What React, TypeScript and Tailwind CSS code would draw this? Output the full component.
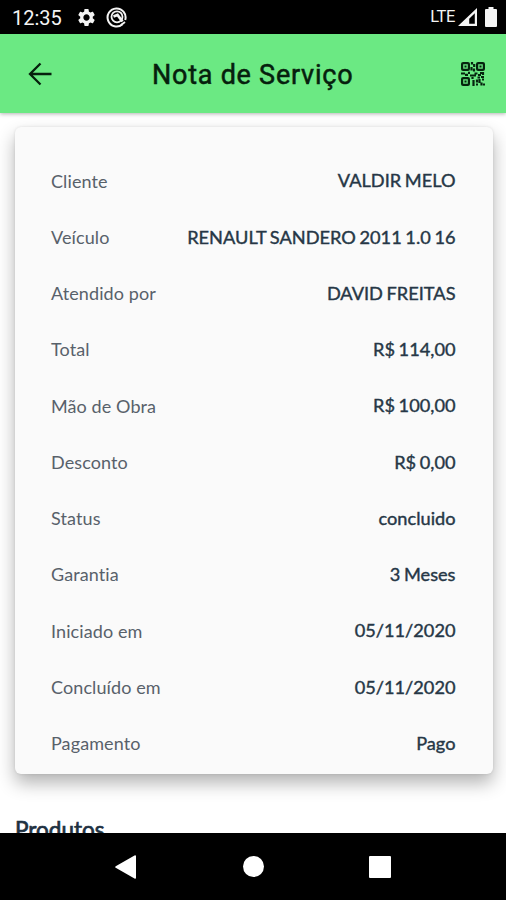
import { MdSettings } from "react-icons/md";

const rows = [
    { label: "Cliente", value: "VALDIR MELO" },
    { label: "Veículo", value: "RENAULT SANDERO 2011 1.0 16" },
    { label: "Atendido por", value: "DAVID FREITAS" },
    { label: "Total", value: "R$ 114,00" },
    { label: "Mão de Obra", value: "R$ 100,00" },
    { label: "Desconto", value: "R$ 0,00" },
    { label: "Status", value: "concluido" },
    { label: "Garantia", value: "3 Meses" },
    { label: "Iniciado em", value: "05/11/2020" },
    { label: "Concluído em", value: "05/11/2020" },
    { label: "Pagamento", value: "Pago" },
];

function BackIcon() {
    return (
        <svg width="24" height="24" viewBox="0 0 24 24" fill="none" stroke="#06200d" strokeWidth="2.3">
            <path d="M12.5 1.5L2 12l10.5 10.5M2.5 12H23.5" />
        </svg>
    );
}

function QrIcon() {
    return (
        <svg width="24" height="24" viewBox="0 0 24 24" fill="none" stroke="#06240e" strokeWidth="2.2">
            <rect x="1.1" y="1.1" width="6.8" height="6.8" rx="1" />
            <rect x="16.1" y="1.1" width="6.8" height="6.8" rx="1" />
            <rect x="1.1" y="16.1" width="6.8" height="6.8" rx="1" />
            <path strokeWidth="2" d="M3.5 4.5h2M18.5 4.5h2M3.5 19.5h2" />
            <path d="M11 0v2.5M13.2 2v3M10.5 5v3.5M13 6.5v3M0 11.5h4M4 12.8h3M7 10.8h2M9 13.5h6M13.5 11.5h3M19 11h2M22 10v3M17 13h3M20 15h3M16.5 15.5h2.5M11.5 15v2M12.5 18v6M16 17.5v3M18.5 17v4M21 17.5h2M15 22.5h2M20.5 20.5v3M22 22.5h2" />
        </svg>
    );
}

function StatusBar() {
    return (
        <div className="flex h-[34px] shrink-0 items-center bg-black pl-3 pr-[9px] text-[#f4f4f4]">
            <span className="pt-px text-[20px] leading-none">12:35</span>
            <MdSettings size={21} className="ml-[14px]" />
            <svg className="ml-[9px]" width="22" height="22" viewBox="0 0 22 22" fill="none" stroke="currentColor">
                <path strokeWidth="2" d="M16.5 18.2A9 9 0 1 1 19.2 14" />
                <circle cx="11" cy="10.8" r="5.5" strokeWidth="1.8" />
                <path strokeWidth="2.8" d="M7.5 10.5l4-1.5 5 6.5" />
                <path strokeWidth="1.8" d="M15 19l4-3" />
            </svg>
            <span className="ml-auto pt-px text-[16.5px] leading-none tracking-[-0.4px]">LTE</span>
            <svg className="ml-[3px]" width="19" height="18" viewBox="0 0 19 18">
                <path fill="currentColor" fillRule="evenodd" d="M19 0v18H0L19 0zM16.8 5.2L11.2 10.8v5l5.6 0z" />
            </svg>
            <svg className="ml-[8px]" width="12" height="20" viewBox="0 0 12 20">
                <path fill="currentColor" d="M3.5 0h5v2H11a1 1 0 0 1 1 1v16a1 1 0 0 1-1 1H1a1 1 0 0 1-1-1V3a1 1 0 0 1 1-1h2.5z" />
            </svg>
        </div>
    );
}

function NavBar() {
    return (
        <div className="flex h-[67px] shrink-0 items-center bg-black pl-[115px] text-white">
            <svg width="21" height="24" viewBox="0 0 21 24">
                <path fill="currentColor" d="M19.5.5a1 1 0 0 1 1.5.8v21.4a1 1 0 0 1-1.5.8L.7 12.8a1 1 0 0 1 0-1.6z" />
            </svg>
            <span className="ml-[107px] size-[21px] rounded-full bg-white" />
            <span className="ml-[105px] size-[22px] rounded-[1px] bg-white" />
        </div>
    );
}

export default function App() {
    return (
        <div className="flex h-[900px] w-[506px] flex-col overflow-hidden bg-white font-['Roboto',sans-serif]">
            <StatusBar />

            <header className="z-10 flex h-[79px] shrink-0 items-center bg-[#6be983] pl-[28px] pr-[21px] text-[#06200d] shadow-[0_1px_4px_rgba(0,0,0,0.3)]">
                <BackIcon />
                <h1 className="ml-[100px] mr-auto pt-[4px] text-[27px] leading-none tracking-[0.75px] [-webkit-text-stroke:0.5px_#06200d]">
                    Nota de Serviço
                </h1>
                <QrIcon />
            </header>

            <main className="flex-1 overflow-hidden px-[15px] pt-[14px] font-['Lato',sans-serif]">
                <div className="h-[647px] w-[478px] rounded-[6px] bg-[#fafafa] pl-[36px] pr-[37.5px] pt-[26px] shadow-[0_9px_18px_rgba(0,0,0,0.3),0_0_3px_rgba(0,0,0,0.1)]">
                    {rows.map((row) => (
                        <div key={row.label} className="flex h-[56.25px] items-center justify-between text-[18px]">
                            <span className="tracking-[0.1px] text-[#58616a] [font-variant-ligatures:none]">
                                {row.label}
                            </span>
                            <span className="text-[18.2px] text-[#263746] [-webkit-text-stroke:0.4px_#263746] [word-spacing:-1px]">
                                {row.value}
                            </span>
                        </div>
                    ))}
                </div>

                <h2 className="mt-[43px] text-[22.5px] leading-[26px] text-[#1d3040] [-webkit-text-stroke:0.7px_#1d3040]">
                    Produtos
                </h2>
            </main>

            <NavBar />
        </div>
    );
}
